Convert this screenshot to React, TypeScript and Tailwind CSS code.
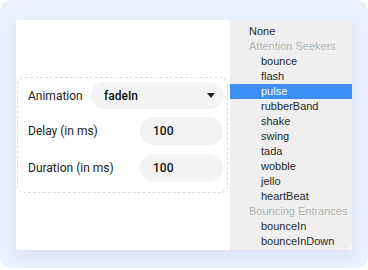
import React from "react";

const items: { label: string; group?: boolean; selected?: boolean; indent?: boolean }[] = [
  { label: "None" },
  { label: "Attention Seekers", group: true },
  { label: "bounce", indent: true },
  { label: "flash", indent: true },
  { label: "pulse", indent: true, selected: true },
  { label: "rubberBand", indent: true },
  { label: "shake", indent: true },
  { label: "swing", indent: true },
  { label: "tada", indent: true },
  { label: "wobble", indent: true },
  { label: "jello", indent: true },
  { label: "heartBeat", indent: true },
  { label: "Bouncing Entrances", group: true },
  { label: "bounceIn", indent: true },
  { label: "bounceInDown", indent: true },
];

export default function App() {
  return (
    <div className="w-[368px] h-[270px] bg-white">
      <div className="w-[368px] h-[268px] rounded-[12px] bg-[#ebf0fd] pt-[20px] pl-[16px]">
        <div className="relative w-[336px] h-[230px] bg-white rounded-[3px] shadow-[0_6px_14px_rgba(120,130,170,0.12)] flex items-center pl-[1px]">
          <div
            className="w-[211px] h-[116px] border border-dashed border-[#dcdcdc] rounded-[8px] pl-[10px] pr-[4px] pt-[4px] flex flex-col gap-[8px]"
            style={{ fontFamily: "Roboto, sans-serif" }}
          >
            <div className="flex items-center h-[27px]">
              <span className="text-[12px] text-[#222] w-[63px]">Animation</span>
              <div className="flex-1 h-[27px] rounded-full bg-[#f3f3f3] flex items-center pl-[13px] pr-[8px]">
                <span className="text-[12px] font-medium text-[#111] flex-1">fadeIn</span>
                <svg width="8" height="5" viewBox="0 0 8 5">
                  <path d="M0 0 L8 0 L4 5 Z" fill="#222" />
                </svg>
              </div>
            </div>
            <div className="flex items-center h-[28px]">
              <span className="text-[12px] text-[#222] w-[112px]">Delay (in ms)</span>
              <div className="flex-1 h-[28px] rounded-full bg-[#f3f3f3] flex items-center pl-[13px]">
                <span className="text-[12px] font-medium text-[#111]">100</span>
              </div>
            </div>
            <div className="flex items-center h-[28px] pt-[1px]">
              <span className="text-[12px] text-[#222] w-[112px]">Duration (in ms)</span>
              <div className="flex-1 h-[28px] rounded-full bg-[#f3f3f3] flex items-center pl-[13px]">
                <span className="text-[12px] font-medium text-[#111]">100</span>
              </div>
            </div>
          </div>
          <div
            className="absolute left-[214px] top-0 w-[122px] h-[230px] bg-[#efefef] rounded-br-[6px] pt-[4px]"
            style={{ fontFamily: "'Liberation Sans', Arial, sans-serif" }}
          >
            {items.map((it) => (
              <div
                key={it.label}
                className={
                  "h-[15px] leading-[15px] text-[11px] " +
                  (it.selected ? "bg-[#3d8ef5] text-white " : it.group ? "text-[#b4b4b4] " : "text-[#2a2a2a] ") +
                  (it.indent ? "pl-[31px]" : "pl-[19px]")
                }
              >
                {it.label}
              </div>
            ))}
          </div>
        </div>
      </div>
    </div>
  );
}
